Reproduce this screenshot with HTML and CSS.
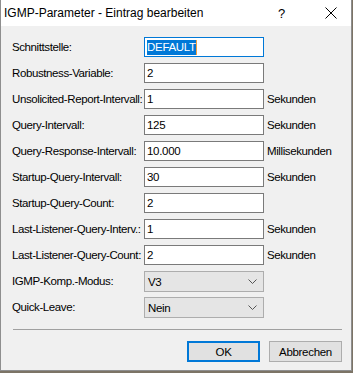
FILE: index.html
```html
<!DOCTYPE html>
<html lang="de">
<head>
    <meta charset="UTF-8">
    <title>IGMP-Parameter - Eintrag bearbeiten</title>
    <link rel="stylesheet" href="styles.css">
</head>
<body>

    <div class="dialog">
        <div class="titlebar">
            <span class="title">IGMP-Parameter - Eintrag bearbeiten</span>
            <span class="help">?</span>
            <span class="close">
                <svg width="12" height="12" viewBox="0 0 12 12">
                    <path d="M0.5 0.5 L11.5 11.5 M11.5 0.5 L0.5 11.5" stroke="#000" stroke-width="1" fill="none"/>
                </svg>
            </span>
        </div>

        <div class="content">
            <form class="fields">
                <label>Schnittstelle:</label>
                <div class="field focused"><span class="selected">DEFAULT</span><span class="caret"></span></div>
                <span class="unit"></span>

                <label>Robustness-Variable:</label>
                <div class="field">2</div>
                <span class="unit"></span>

                <label>Unsolicited-Report-Intervall:</label>
                <div class="field">1</div>
                <span class="unit">Sekunden</span>

                <label>Query-Intervall:</label>
                <div class="field">125</div>
                <span class="unit">Sekunden</span>

                <label>Query-Response-Intervall:</label>
                <div class="field">10.000</div>
                <span class="unit">Millisekunden</span>

                <label>Startup-Query-Intervall:</label>
                <div class="field">30</div>
                <span class="unit">Sekunden</span>

                <label>Startup-Query-Count:</label>
                <div class="field">2</div>
                <span class="unit"></span>

                <label>Last-Listener-Query-Interv.:</label>
                <div class="field">1</div>
                <span class="unit">Sekunden</span>

                <label>Last-Listener-Query-Count:</label>
                <div class="field">2</div>
                <span class="unit">Sekunden</span>

                <label>IGMP-Komp.-Modus:</label>
                <div class="combo">
                    <span>V3</span>
                    <svg width="9" height="5" viewBox="0 0 9 5"><path d="M0.5 0.5 L4.5 4.5 L8.5 0.5" stroke="#555" fill="none"/></svg>
                </div>
                <span class="unit"></span>

                <label>Quick-Leave:</label>
                <div class="combo">
                    <span>Nein</span>
                    <svg width="9" height="5" viewBox="0 0 9 5"><path d="M0.5 0.5 L4.5 4.5 L8.5 0.5" stroke="#555" fill="none"/></svg>
                </div>
                <span class="unit"></span>
            </form>

            <div class="separator"></div>

            <div class="buttons">
                <button type="button" class="btn default">OK</button>
                <button type="button" class="btn">Abbrechen</button>
            </div>
        </div>
    </div>

</body>
</html>
```

FILE: styles.css
```css
body {
    margin: 0;
    padding: 0;
    background-color: #7c7466;
    font-family: 'Liberation Sans', Arial, sans-serif;
    font-size: 11.5px;
    color: #000;
}

.dialog {
    width: 350px;
    height: 370px;
    background-color: #f0f0f0;
    border: 1px solid #8e8e8e;
    border-top: none;
}

.titlebar {
    height: 26px;
    background-color: #fff;
    display: flex;
    align-items: center;
    font-size: 12px;
}

.title {
    padding-left: 3px;
    flex: 1;
}

.help {
    width: 12px;
    margin-right: 35px;
    font-size: 13px;
}

.close {
    display: flex;
    margin-right: 14px;
}

.content {
    padding: 11px 9px 0 11px;
}

.fields {
    display: grid;
    grid-template-columns: 129px 120px auto;
    grid-auto-rows: 20px;
    column-gap: 3px;
    row-gap: 6px;
    margin: 0;
}

.fields label,
.fields .unit {
    display: flex;
    align-items: center;
    letter-spacing: -0.4px;
    white-space: nowrap;
}

.field {
    box-sizing: border-box;
    border: 1px solid #7a7a7a;
    background-color: #fff;
    padding: 0 2px;
    display: flex;
    align-items: center;
    letter-spacing: -0.3px;
}

.field.focused {
    border-color: #0078d7;
}

.selected {
    background-color: #0078d7;
    color: #fff;
    line-height: 15px;
}

.caret {
    width: 1px;
    height: 15px;
    background-color: #f0a040;
}

.combo {
    box-sizing: border-box;
    height: 21px;
    border: 1px solid #adadad;
    background-color: #e5e5e5;
    display: flex;
    align-items: center;
    justify-content: space-between;
    padding: 0 6px 0 3px;
    letter-spacing: -0.3px;
}

.separator {
    height: 1px;
    background-color: #a0a0a0;
    margin: 12px 0 0 1px;
}

.buttons {
    display: flex;
    justify-content: flex-end;
    gap: 9px;
    margin-top: 11px;
}

.btn {
    box-sizing: border-box;
    width: 73px;
    height: 21px;
    background-color: #e1e1e1;
    border: 1px solid #adadad;
    font-family: 'Liberation Sans', Arial, sans-serif;
    font-size: 11.5px;
    letter-spacing: -0.3px;
    color: #000;
    padding: 0;
}

.btn.default {
    border: 2px solid #0078d7;
}
```
